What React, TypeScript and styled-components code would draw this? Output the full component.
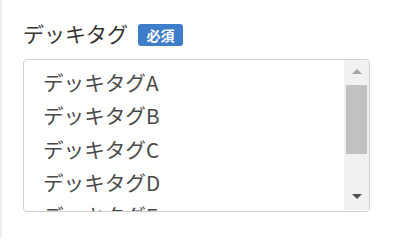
import React from "react";
import styled, { createGlobalStyle } from "styled-components";

const Global = createGlobalStyle`
  html, body { margin: 0; padding: 0; background: #ffffff; }
  body { font-family: "Noto Sans CJK JP", "Noto Sans", sans-serif; }
`;

const Page = styled.div`
  display: flex;
  width: 416px;
  height: 238px;
  background: #ffffff;
`;

const Strip = styled.div`
  width: 2px;
  background: #efeff5;
  flex: none;
`;

const Content = styled.div`
  flex: 1;
  padding: 19px 0 0 21px;
  display: flex;
  flex-direction: column;
`;

const LabelRow = styled.div`
  display: flex;
  align-items: center;
  gap: 10px;
  height: 28px;
`;

const Label = styled.span`
  font-size: 21px;
  line-height: 28px;
  color: #333333;
`;

const Badge = styled.span`
  display: inline-flex;
  align-items: center;
  justify-content: center;
  width: 45px;
  height: 22px;
  margin-top: 3px;
  border-radius: 3px;
  background: #3d7dca;
  color: #ffffff;
  font-size: 14px;
  font-weight: 700;
  line-height: 1;
`;

const Box = styled.div`
  margin-top: 12px;
  width: 347px;
  height: 153px;
  box-sizing: border-box;
  border: 1px solid #cfcfcf;
  border-radius: 4px;
  display: flex;
  overflow: hidden;
`;

const List = styled.div`
  flex: 1;
  overflow: hidden;
  padding: 6px 0 0 19px;
`;

const Option = styled.div`
  height: 33.3px;
  line-height: 33.3px;
  font-size: 20.6px;
  color: #4a4a4a;
  white-space: nowrap;
`;

const Scrollbar = styled.div`
  width: 25px;
  flex: none;
  margin-bottom: 1px;
  background: #f1f1f1;
  display: flex;
  flex-direction: column;
`;

const ArrowButton = styled.div`
  height: 25px;
  flex: none;
  display: flex;
  justify-content: center;
  align-items: flex-start;
  padding-top: 9px;
  box-sizing: border-box;
`;

const Triangle = styled.div<{ $down?: boolean }>`
  width: 0;
  height: 0;
  border-left: 5px solid transparent;
  border-right: 5px solid transparent;
  ${(p) =>
    p.$down
      ? "border-top: 5px solid #505050;"
      : "border-bottom: 5px solid #a3a3a3;"}
`;

const Track = styled.div`
  flex: 1;
  display: flex;
  flex-direction: column;
  padding: 0 2px;
`;

const Thumb = styled.div`
  height: 69px;
  background: #c1c1c1;
`;

const items = ["デッキタグA", "デッキタグB", "デッキタグC", "デッキタグD", "デッキタグE"];

export default function App() {
  return (
    <>
      <Global />
      <Page>
        <Strip />
        <Content>
          <LabelRow>
            <Label>デッキタグ</Label>
            <Badge>必須</Badge>
          </LabelRow>
          <Box role="listbox">
            <List>
              {items.map((t) => (
                <Option key={t} role="option">
                  {t}
                </Option>
              ))}
            </List>
            <Scrollbar>
              <ArrowButton>
                <Triangle />
              </ArrowButton>
              <Track>
                <Thumb />
              </Track>
              <ArrowButton>
                <Triangle $down />
              </ArrowButton>
            </Scrollbar>
          </Box>
        </Content>
      </Page>
    </>
  );
}
